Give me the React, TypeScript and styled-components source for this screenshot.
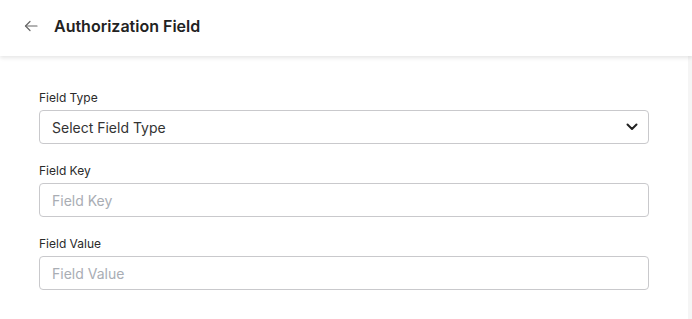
import React from 'react';
import styled, { createGlobalStyle } from 'styled-components';

const GlobalStyle = createGlobalStyle`
  html, body {
    margin: 0;
    padding: 0;
    background: #ffffff;
    font-family: Inter, "Noto Sans", sans-serif;
  }
  * { box-sizing: border-box; }
`;

const Page = styled.div`
  display: flex;
  flex-direction: column;
  width: 692px;
  height: 319px;
  overflow: hidden;
  background: #fff;
`;

const Header = styled.header`
  display: flex;
  align-items: center;
  gap: 16px;
  height: 56px;
  padding: 0 0 4px 24px;
  background: #fff;
  box-shadow: 0 2px 4px rgba(0, 0, 0, 0.1);
  position: relative;
  z-index: 1;
`;

const BackButton = styled.button`
  display: flex;
  align-items: center;
  justify-content: center;
  width: 14px;
  height: 14px;
  padding: 0;
  border: none;
  background: none;
  color: #666;
  cursor: pointer;
`;

const Title = styled.h1`
  margin: 0;
  font-size: 16px;
  font-weight: 600;
  color: #222;
  letter-spacing: 0;
`;

const Body = styled.div`
  flex: 1;
  display: flex;
`;

const Form = styled.form`
  flex: 1;
  display: flex;
  flex-direction: column;
  gap: 20px;
  padding: 35px 39px 0 39px;
`;

const Scrollbar = styled.div`
  width: 4px;
  background: #f5f5f5;
`;

const Group = styled.div`
  display: flex;
  flex-direction: column;
  gap: 5px;
`;

const Label = styled.label`
  font-size: 12px;
  line-height: 14px;
  color: #2a2a2a;
`;

const SelectBox = styled.div`
  display: flex;
  align-items: center;
  justify-content: space-between;
  height: 34px;
  padding: 0 10px 0 12px;
  border: 1px solid #c9c9cc;
  border-radius: 4px;
  font-size: 14px;
  color: #333;
`;

const Input = styled.input`
  height: 34px;
  padding: 0 12px;
  border: 1px solid #c9c9cc;
  border-radius: 4px;
  font-family: inherit;
  font-size: 14px;
  color: #333;
  outline: none;

  &::placeholder {
    color: #a9adb4;
  }
`;

export default function App() {
  return (
    <>
      <GlobalStyle />
      <Page>
        <Header>
          <BackButton type="button" aria-label="Back">
            <svg width="14" height="14" viewBox="0 0 14 14" fill="none" stroke="currentColor" strokeWidth="1.2" strokeLinecap="round" strokeLinejoin="round">
              <path d="M13 7H1.5" />
              <path d="M6 2.5L1.5 7L6 11.5" />
            </svg>
          </BackButton>
          <Title>Authorization Field</Title>
        </Header>
        <Body>
          <Form>
            <Group>
              <Label>Field Type</Label>
              <SelectBox>
                <span>Select Field Type</span>
                <svg width="12" height="8" viewBox="0 0 12 8" fill="none" stroke="#222" strokeWidth="2" strokeLinecap="round" strokeLinejoin="round">
                  <path d="M1.5 1.5L6 6L10.5 1.5" />
                </svg>
              </SelectBox>
            </Group>
            <Group>
              <Label>Field Key</Label>
              <Input placeholder="Field Key" />
            </Group>
            <Group>
              <Label>Field Value</Label>
              <Input placeholder="Field Value" />
            </Group>
          </Form>
          <Scrollbar />
        </Body>
      </Page>
    </>
  );
}
